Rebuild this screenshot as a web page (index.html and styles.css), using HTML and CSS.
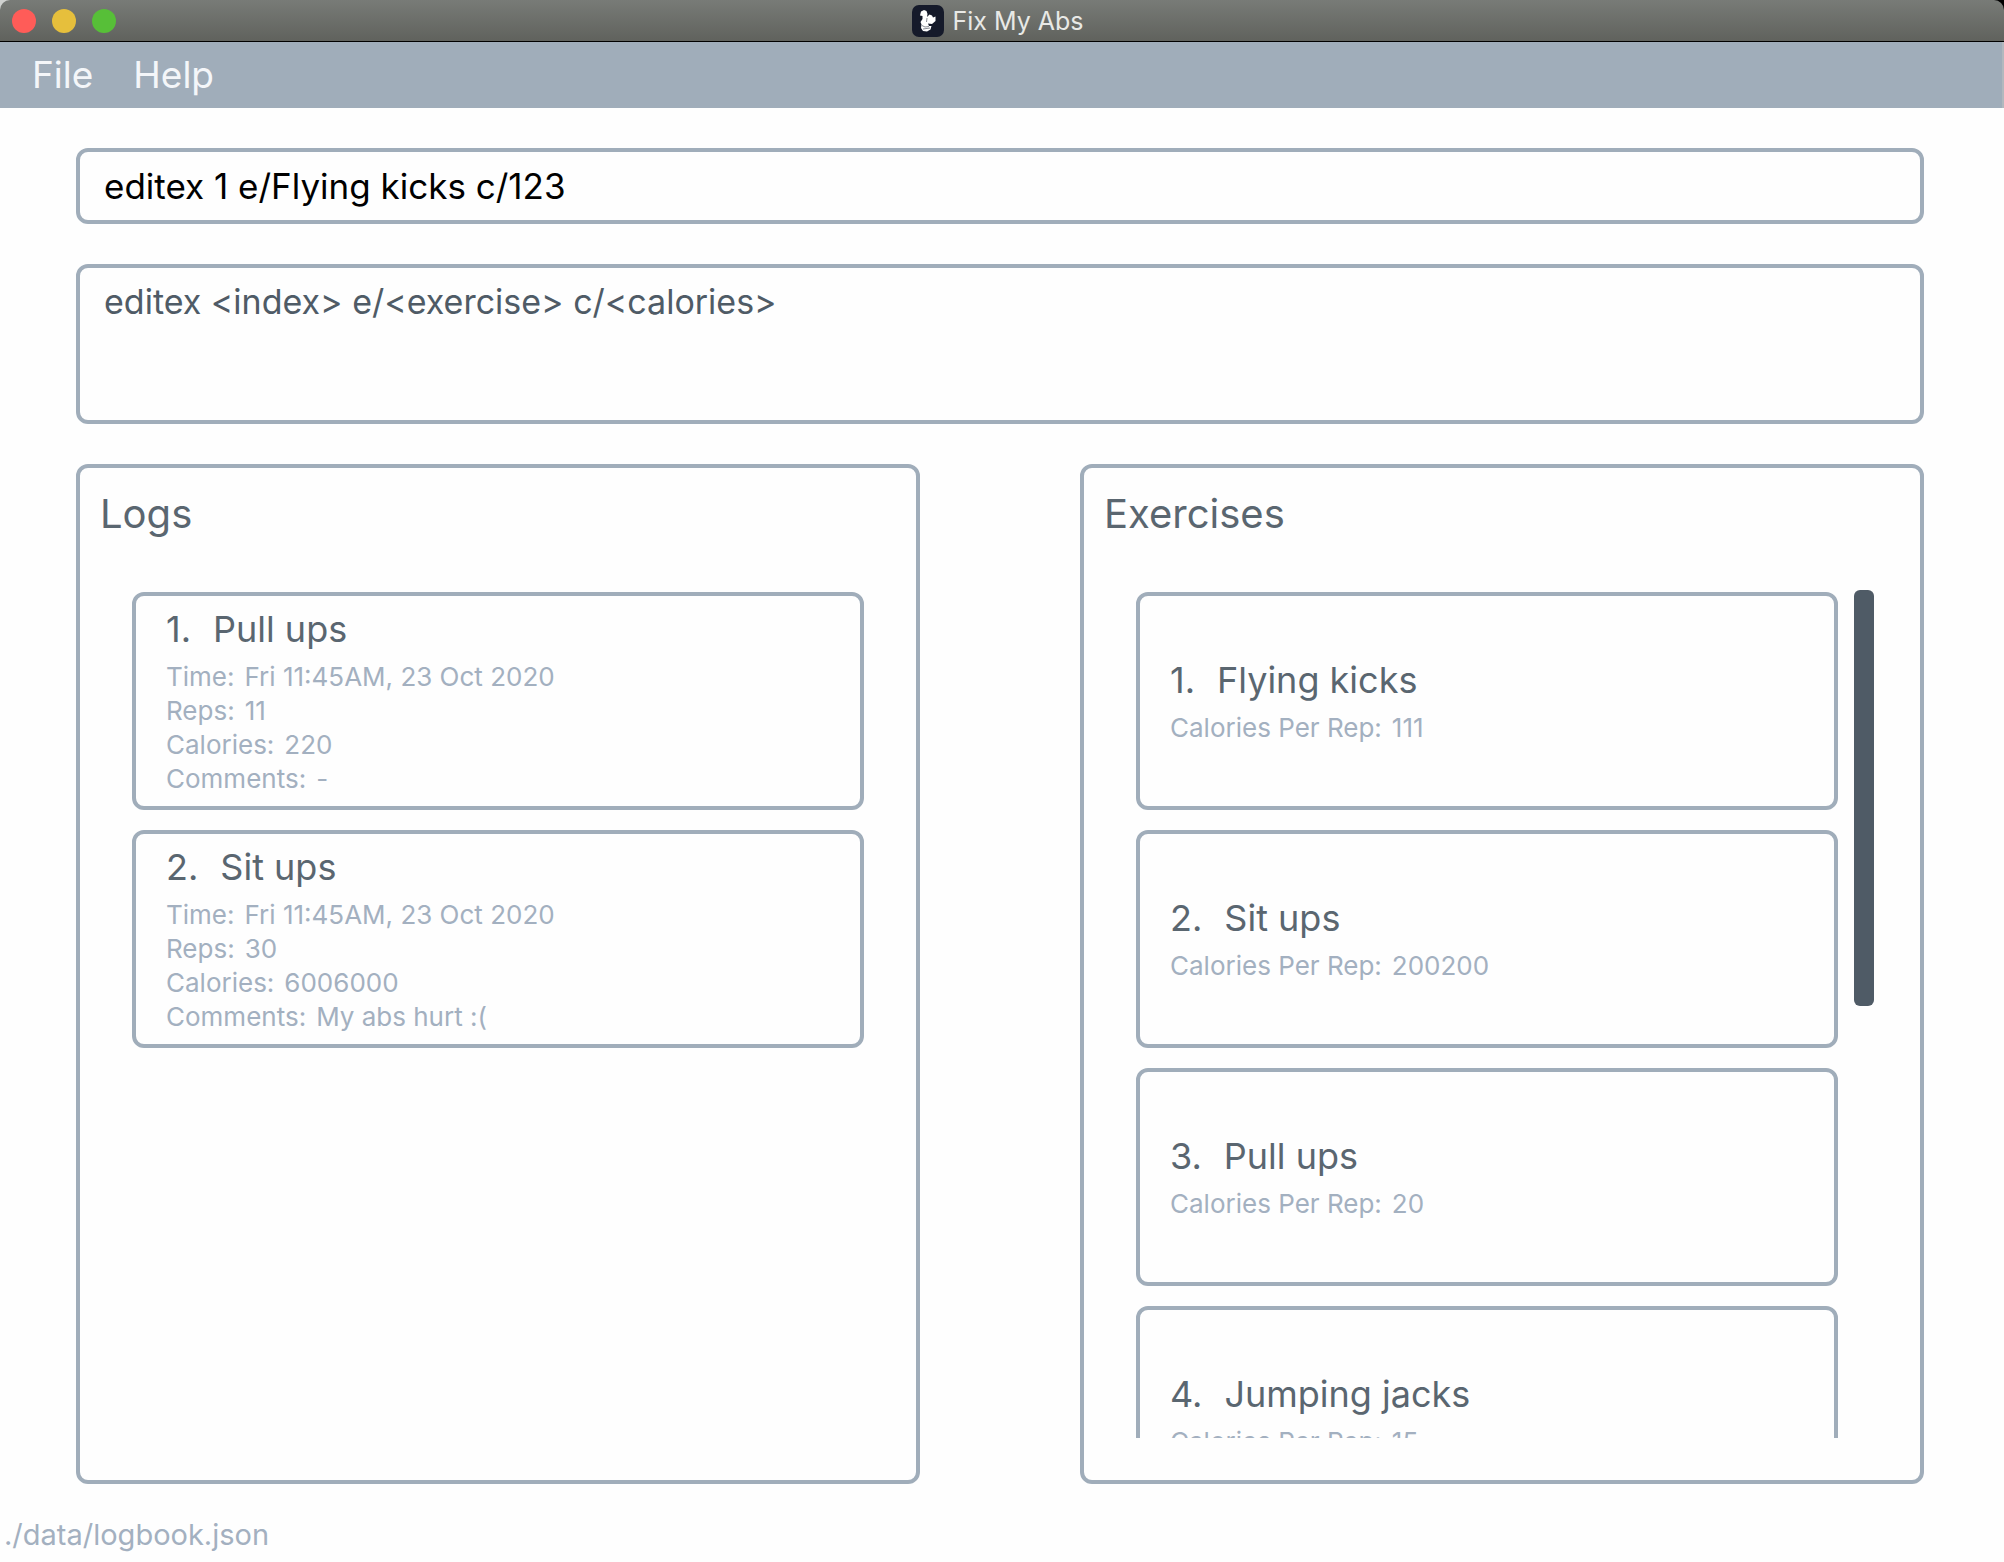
FILE: index.html
```html
<!DOCTYPE html>
<html lang="en">
<head>
<meta charset="utf-8">
<title>Fix My Abs</title>
<link rel="stylesheet" href="styles.css">
</head>
<body>
<div class="backdrop">
  <header class="titlebar">
    <div class="lights">
      <button class="light close" aria-label="Close"></button>
      <button class="light minimise" aria-label="Minimise"></button>
      <button class="light zoom" aria-label="Zoom"></button>
    </div>
    <div class="caption">
      <svg class="logo" viewBox="0 0 32 32" aria-hidden="true">
        <rect width="32" height="32" rx="7" fill="#151a2a"/>
        <path d="M9 6.500 L12 5 L14.500 6 L15.500 9 L15 12 L17.500 9.500 L20 10.500 L21 12.500 L23.500 11.500 L23.500 16 L20 19 L16 18.500 L17 21 L19.500 21 L18.500 24.500 L15 26.500 L11 26 L9 23 L9.500 19.500 L8.500 17 L10.500 14 L10.500 11 L8 10.500 Z" fill="#fff"/>
        <path d="M10 20.500 L13 22 L17 21.500 M11 24 L18 23 M15 13 L14.500 17" fill="none" stroke="#151a2a" stroke-width=".5"/>
      </svg>
      <span>Fix My Abs</span>
    </div>
  </header>
</div>
<nav class="menubar">
  <button class="menu">File</button>
  <button class="menu">Help</button>
</nav>
<main class="content">
  <input class="box command" type="text" aria-label="Command" value="editex 1 e/Flying kicks c/123">
  <textarea class="box result" aria-label="Result" readonly>editex &lt;index&gt; e/&lt;exercise&gt; c/&lt;calories&gt;</textarea>
  <div class="panels">
    <section class="box panel">
      <h2 class="heading">Logs</h2>
      <div class="scroller">
        <ol class="list">
          <li class="box card">
            <h3 class="name"><span>1.</span><span>Pull ups</span></h3>
            <p class="detail"><span>Time:</span><span>Fri 11:45AM, 23 Oct 2020</span></p>
            <p class="detail"><span>Reps:</span><span>11</span></p>
            <p class="detail"><span>Calories:</span><span>220</span></p>
            <p class="detail"><span>Comments:</span><span>-</span></p>
          </li>
          <li class="box card">
            <h3 class="name"><span>2.</span><span>Sit ups</span></h3>
            <p class="detail"><span>Time:</span><span>Fri 11:45AM, 23 Oct 2020</span></p>
            <p class="detail"><span>Reps:</span><span>30</span></p>
            <p class="detail"><span>Calories:</span><span>6006000</span></p>
            <p class="detail"><span>Comments:</span><span>My abs hurt :(</span></p>
          </li>
        </ol>
      </div>
    </section>
    <section class="box panel panel-scrolling">
      <h2 class="heading">Exercises</h2>
      <div class="scroller">
        <ol class="list">
          <li class="box card">
            <h3 class="name"><span>1.</span><span>Flying kicks</span></h3>
            <p class="detail"><span>Calories Per Rep:</span><span>111</span></p>
          </li>
          <li class="box card">
            <h3 class="name"><span>2.</span><span>Sit ups</span></h3>
            <p class="detail"><span>Calories Per Rep:</span><span>200200</span></p>
          </li>
          <li class="box card">
            <h3 class="name"><span>3.</span><span>Pull ups</span></h3>
            <p class="detail"><span>Calories Per Rep:</span><span>20</span></p>
          </li>
          <li class="box card">
            <h3 class="name"><span>4.</span><span>Jumping jacks</span></h3>
            <p class="detail"><span>Calories Per Rep:</span><span>15</span></p>
          </li>
        </ol>
        <div class="track"><div class="thumb"></div></div>
      </div>
    </section>
  </div>
</main>
<footer class="status">./data/logbook.json</footer>
</body>
</html>
```
FILE: styles.css
```css
* {
  box-sizing: border-box;
}

body {
  margin: 0;
  height: 100vh;
  display: flex;
  flex-direction: column;
  background: #fefefe;
  color: #5a6670;
  font-family: Inter, "Liberation Sans", sans-serif;
}

h2, h3, p, ol {
  margin: 0;
  padding: 0;
  font-weight: 400;
}

button, input, textarea {
  font: inherit;
}

/* Desktop showing behind the rounded window corners */
.backdrop {
  background: linear-gradient(90deg, #d0d2d0 50%, #000 50%);
}

.titlebar {
  display: grid;
  grid-template-columns: 1fr auto 1fr;
  align-items: center;
  height: 42px;
  padding: 0 20px 0 12px;
  border-bottom: 1px solid #000;
  border-radius: 10px 10px 0 0;
  background: linear-gradient(#787b77, #60625d);
}

.lights {
  display: flex;
  gap: 16px;
}

.light {
  width: 24px;
  height: 24px;
  padding: 0;
  border: 0;
  border-radius: 50%;
}

.close { background: #ff5c58; }
.minimise { background: #e6bf3c; }
.zoom { background: #57bf38; }

.caption {
  display: flex;
  align-items: center;
  gap: 8px;
  color: #e8e9e6;
  font-size: 25px;
  line-height: 32px;
}

.logo {
  width: 32px;
  height: 32px;
}

.menubar {
  display: flex;
  gap: 40px;
  height: 66px;
  padding: 0 32px;
  border-right: 2px solid #b2b8be;
  background: #a0adba;
}

.menu {
  padding: 0 0 2px;
  border: 0;
  background: none;
  color: #f4f6f9;
  font-size: 37px;
}

.content {
  flex: 1;
  min-height: 0;
  display: flex;
  flex-direction: column;
  gap: 40px;
  padding: 40px 80px 0 76px;
}

.box {
  border: 4px solid #a0adba;
  border-radius: 12px;
  background: #fefefe;
}

.command,
.result {
  width: 100%;
  padding: 12px 24px;
  font-size: 34px;
  line-height: 44px;
  outline: none;
  resize: none;
}

.command {
  height: 76px;
  padding: 10px 24px;
  color: #000;
  font-size: 35px;
}

.result {
  height: 160px;
  color: #4f5b66;
}

.panels {
  flex: 1;
  min-height: 0;
  display: grid;
  grid-template-columns: 1fr 1fr;
  grid-template-rows: 100%;
  gap: 160px;
}

.panel {
  display: flex;
  flex-direction: column;
  padding: 22px 52px 42px;
}

.panel-scrolling {
  padding-right: 46px;
}

.heading {
  margin: 0 -32px 52px;
  font-size: 40px;
  line-height: 48px;
}

.scroller {
  flex: 1;
  min-height: 0;
  display: flex;
  gap: 16px;
  overflow: hidden;
}

.list {
  flex: 1;
  display: flex;
  flex-direction: column;
  gap: 20px;
  padding-top: 2px;
  list-style: none;
}

.card {
  flex: none;
  display: flex;
  flex-direction: column;
  justify-content: center;
  height: 218px;
  padding: 0 30px;
}

.name {
  display: flex;
  gap: 22px;
  padding-bottom: 8px;
  font-size: 36px;
  line-height: 46px;
}

.detail {
  display: flex;
  gap: 10px;
  color: #a3b0c0;
  font-size: 26px;
  line-height: 34px;
}

.track {
  width: 20px;
}

.thumb {
  height: 49%;
  border-radius: 6px;
  background: #4f5b66;
}

.status {
  height: 78px;
  padding: 33px 4px 0;
  color: #a3b0c0;
  font-size: 29px;
  line-height: 36px;
}
```
